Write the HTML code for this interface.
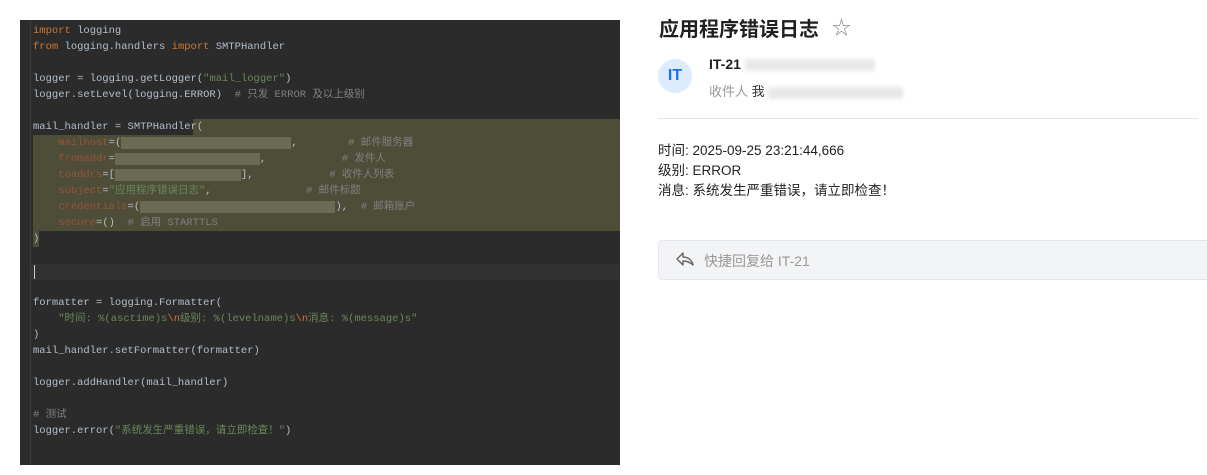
<!DOCTYPE html>
<html><head><meta charset="utf-8"><style>
body{margin:0;width:1207px;height:475px;background:#fff;position:relative;overflow:hidden;font-family:"Liberation Sans","Noto Sans CJK SC",sans-serif}
#ed{position:absolute;left:20px;top:20px;width:600px;height:445px;background:#2b2b2b}
.hl{position:absolute;background:#4e4d38}
.ln{position:absolute;left:13px;margin-top:3px;font:10.5px/16px "Liberation Mono","Noto Sans CJK SC",monospace;color:#b3bfcc;white-space:pre}
.k{color:#cc7832}.s{color:#6a8759}.c{color:#808080}.p{color:#94553a}.b{color:#6b6a55;background:#6b6a55}
.bl{display:inline-block;background:#e8e8e8;height:12px;vertical-align:middle;filter:blur(2px)}
</style></head><body>
<div id="ed">
<div style="position:absolute;left:10px;top:0;width:1px;height:445px;background:#3c3c3c"></div>
<div class="hl" style="left:173px;top:99px;width:427px;height:16px"></div>
<div class="hl" style="left:13px;top:115px;width:587px;height:96px"></div>
<div class="hl" style="left:13px;top:211px;width:6px;height:16px"></div>
<div style="position:absolute;left:11px;top:244px;width:589px;height:16px;background:#323232"></div>
<div style="position:absolute;left:14px;top:245px;width:1px;height:14px;background:#ccc"></div>
<div class="ln" style="top:0"><span class="k">import</span> logging</div>
<div class="ln" style="top:16px"><span class="k">from</span> logging.handlers <span class="k">import</span> SMTPHandler</div>
<div class="ln" style="top:48px">logger = logging.getLogger(<span class="s">"mail_logger"</span>)</div>
<div class="ln" style="top:64px">logger.setLevel(logging.ERROR)  <span class="c"># 只发 ERROR 及以上级别</span></div>
<div class="ln" style="top:96px">mail_handler = SMTPHandler(</div>
<div class="ln" style="top:112px">    <span class="p">mailhost</span>=(<span class="b">xxxxxxxxxxxxxxxxxxxxxxxxxxx</span>,        <span class="c"># 邮件服务器</span></div>
<div class="ln" style="top:128px">    <span class="p">fromaddr</span>=<span class="b">xxxxxxxxxxxxxxxxxxxxxxx</span>,            <span class="c"># 发件人</span></div>
<div class="ln" style="top:144px">    <span class="p">toaddrs</span>=[<span class="b">xxxxxxxxxxxxxxxxxxxx</span>],            <span class="c"># 收件人列表</span></div>
<div class="ln" style="top:160px">    <span class="p">subject</span>=<span class="s">"应用程序错误日志"</span>,               <span class="c"># 邮件标题</span></div>
<div class="ln" style="top:176px">    <span class="p">credentials</span>=(<span class="b">xxxxxxxxxxxxxxxxxxxxxxxxxxxxxxx</span>),  <span class="c"># 邮箱账户</span></div>
<div class="ln" style="top:192px">    <span class="p">secure</span>=()  <span class="c"># 启用 STARTTLS</span></div>
<div class="ln" style="top:208px">)</div>
<div class="ln" style="top:272px">formatter = logging.Formatter(</div>
<div class="ln" style="top:288px">    <span class="s">"时间: %(asctime)s<span class="k">\n</span>级别: %(levelname)s<span class="k">\n</span>消息: %(message)s"</span></div>
<div class="ln" style="top:304px">)</div>
<div class="ln" style="top:320px">mail_handler.setFormatter(formatter)</div>
<div class="ln" style="top:352px">logger.addHandler(mail_handler)</div>
<div class="ln" style="top:384px"><span class="c"># 测试</span></div>
<div class="ln" style="top:400px">logger.error(<span class="s">"系统发生严重错误，请立即检查！"</span>)</div>
</div>

<div style="position:absolute;left:659px;top:13px;font-size:20px;font-weight:bold;color:#1f1f1f">应用程序错误日志</div>
<div style="position:absolute;left:832px;top:13px;font-size:19px;color:#888">☆</div>
<div style="position:absolute;left:658px;top:59px;width:34px;height:34px;border-radius:50%;background:#dcebfd;color:#1a73e8;font-weight:bold;font-size:16px;line-height:34px;text-align:center">IT</div>
<div style="position:absolute;left:709px;top:56px;font-size:14px;font-weight:bold;color:#1f1f1f">IT-21 <span class="bl" style="width:130px"></span></div>
<div style="position:absolute;left:709px;top:81px;font-size:13px;color:#999">收件人 <span style="color:#333">我</span> <span class="bl" style="width:135px"></span></div>
<div style="position:absolute;left:658px;top:118px;width:540px;height:1px;background:#e6e6e6"></div>
<div style="position:absolute;left:658px;top:141px;font-size:13.5px;line-height:20px;color:#222">时间: 2025-09-25 23:21:44,666<br>级别: ERROR<br>消息: 系统发生严重错误，请立即检查！</div>
<div style="position:absolute;left:658px;top:240px;width:560px;height:38px;background:#f3f4f6;border:1px solid #e4e6ea;border-radius:4px"></div>
<svg style="position:absolute;left:676px;top:251px" width="18" height="16" viewBox="0 0 18 16"><path d="M7 2 L1 8 L7 14 L7 10 C11 10 14 11 17 14 C16 9 12 6 7 6 Z" fill="none" stroke="#666" stroke-width="1.4" stroke-linejoin="round"/></svg>
<div style="position:absolute;left:704px;top:251px;font-size:14px;color:#999">快捷回复给 IT-21</div>
</body></html>
